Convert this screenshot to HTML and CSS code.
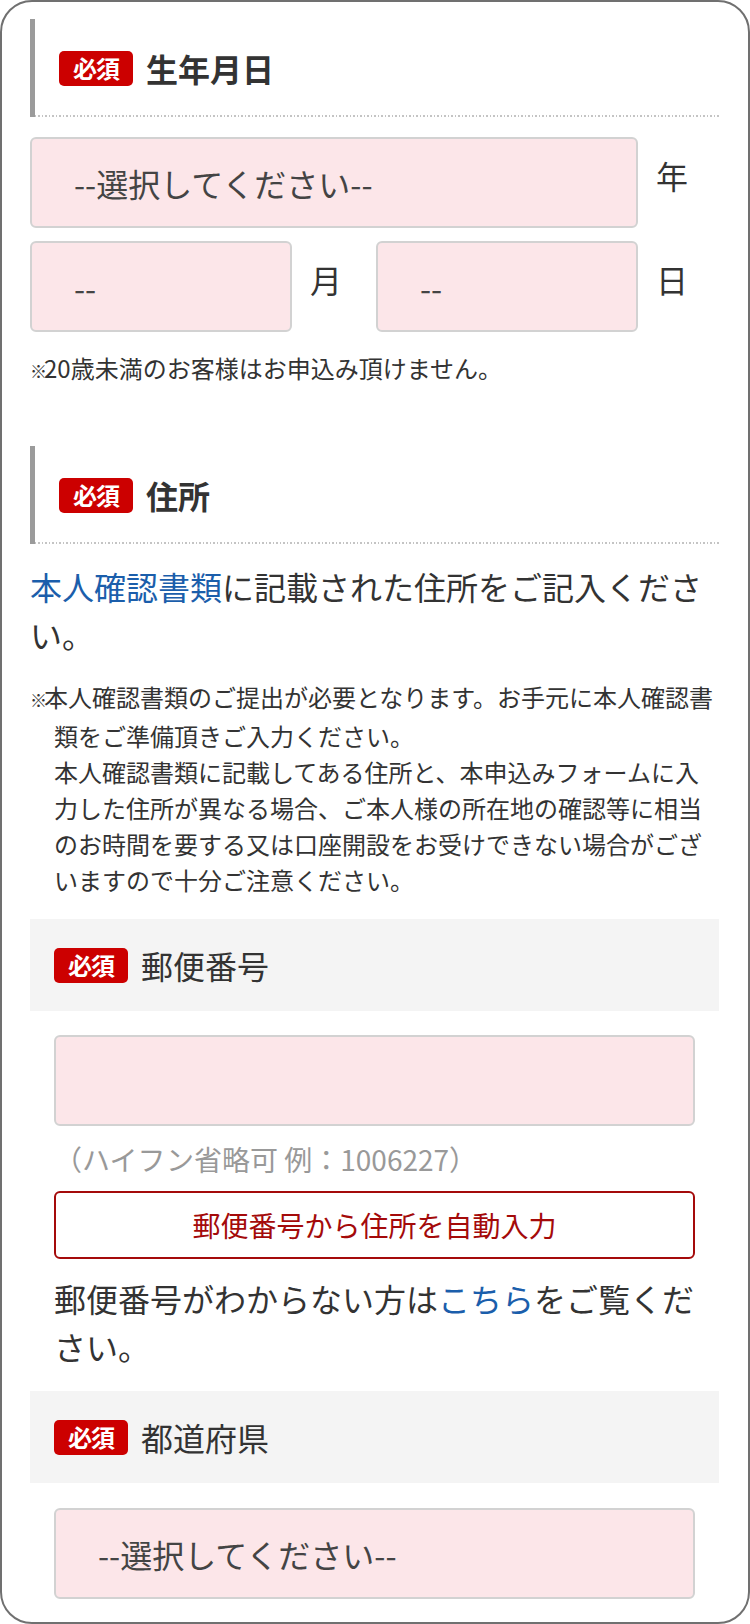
FILE: index.html
```html
<!DOCTYPE html>
<html lang="ja">
<head>
<meta charset="utf-8">
<title>お申込みフォーム</title>
<link rel="stylesheet" href="styles.css">
</head>
<body>
<div class="frame">

  <section class="block block-birth">
    <h2 class="heading"><span class="badge">必須</span><span class="heading-text">生年月日</span></h2>

    <div class="date-row">
      <div class="date-unit">
        <select class="select"><option>--選択してください--</option></select>
        <span class="unit-label">年</span>
      </div>
    </div>
    <div class="date-row date-row-split">
      <div class="date-unit">
        <select class="select"><option>--</option></select>
        <span class="unit-label">月</span>
      </div>
      <div class="date-unit">
        <select class="select"><option>--</option></select>
        <span class="unit-label">日</span>
      </div>
    </div>

    <p class="note note-age"><span class="mark">※</span>20歳未満のお客様はお申込み頂けません。</p>
  </section>

  <section class="block block-address">
    <h2 class="heading"><span class="badge">必須</span><span class="heading-text">住所</span></h2>

    <p class="lead"><a class="link" href="#">本人確認書類</a>に記載された住所をご記入ください。</p>

    <p class="note note-docs"><span class="mark">※</span>本人確認書類のご提出が必要となります。お手元に本人確認書類をご準備頂きご入力ください。<br>本人確認書類に記載してある住所と、本申込みフォームに入力した住所が異なる場合、ご本人様の所在地の確認等に相当のお時間を要する又は口座開設をお受けできない場合がございますので十分ご注意ください。</p>

    <div class="subhead"><span class="badge">必須</span><span class="subhead-text">郵便番号</span></div>
    <div class="field">
      <input class="input" type="text" aria-label="郵便番号">
      <p class="hint">（ハイフン省略可 例：1006227）</p>
      <button class="btn-outline" type="button">郵便番号から住所を自動入力</button>
      <p class="lead lead-field">郵便番号がわからない方は<a class="link" href="#">こちら</a>をご覧ください。</p>
    </div>

    <div class="subhead subhead-pref"><span class="badge">必須</span><span class="subhead-text">都道府県</span></div>
    <div class="field">
      <select class="select select-pref"><option>--選択してください--</option></select>
    </div>
  </section>

</div>
</body>
</html>
```

FILE: styles.css
```css
* {
  box-sizing: border-box;
}

html,
body {
  margin: 0;
  padding: 0;
  background: #ffffff;
}

body {
  width: 750px;
  height: 1624px;
  overflow: hidden;
  font-family: "Noto Sans CJK JP", "Noto Sans", sans-serif;
  color: #333333;
}

.frame {
  width: 750px;
  height: 1624px;
  border: 2px solid #707070;
  border-radius: 32px;
  overflow: hidden;
  padding: 0 29px 0 28px;
}

p {
  margin: 0;
}

/* section heading with side bar and dotted rule */
.heading {
  display: flex;
  align-items: center;
  height: 98px;
  margin: 0;
  padding-left: 24px;
  border-left: 5px solid #9b9b9b;
  background-image: repeating-linear-gradient(to right, #c4c4c4 0 1.5px, transparent 1.5px 3.5px);
  background-size: 100% 2px;
  background-position: left bottom;
  background-repeat: no-repeat;
}

.block-birth .heading {
  margin-top: 17px;
}

.block-address .heading {
  margin-top: 57px;
}

.heading-text {
  margin-left: 13px;
  font-size: 32px;
  font-weight: 700;
  line-height: 1;
  color: #333333;
}

.badge {
  display: inline-flex;
  align-items: center;
  justify-content: center;
  height: 35px;
  padding: 0 14px;
  background: #cc0000;
  border-radius: 5px;
  color: #ffffff;
  font-size: 24px;
  font-weight: 700;
  line-height: 1;
  letter-spacing: -1px;
}

/* selects and text inputs */
.select,
.input {
  display: block;
  width: 100%;
  height: 91px;
  margin: 0;
  padding: 0 0 0 42px;
  background: #fce6e9;
  border: 2px solid #d2d2d2;
  border-radius: 6px;
  font-family: inherit;
  font-size: 32px;
  color: #444444;
  -webkit-appearance: none;
  appearance: none;
  outline: none;
}

/* date rows */
.date-row {
  display: flex;
  gap: 38px;
  width: 654px;
}

.block-birth .date-row {
  margin-top: 20px;
}

.block-birth .date-row-split {
  margin-top: 13px;
}

.date-unit {
  flex: 1;
  display: flex;
  align-items: center;
  gap: 18px;
}

.date-unit .select {
  flex: 1;
}

.unit-label {
  width: 28px;
  padding-bottom: 16px;
  font-size: 32px;
  line-height: 1;
  color: #333333;
}

/* notes */
.note {
  font-size: 24px;
  line-height: 36px;
  padding-left: 24px;
  text-indent: -24px;
  color: #333333;
}

.mark {
  display: inline-block;
  width: 14px;
  text-indent: 0;
  font-size: 17px;
  overflow: visible;
  vertical-align: baseline;
}

.note-age {
  margin-top: 18px;
}

.note-docs {
  margin-top: 21px;
}

.lead {
  margin-top: 18px;
  font-size: 32px;
  line-height: 48px;
  color: #333333;
}

.link {
  color: #1b5eab;
  text-decoration: none;
}

/* grey sub headings */
.subhead {
  display: flex;
  align-items: center;
  height: 92px;
  margin-top: 21px;
  padding-left: 24px;
  background: #f4f4f4;
}

.subhead-text {
  margin-left: 13px;
  font-size: 32px;
  line-height: 1;
  color: #333333;
}

.field {
  padding: 0 24px;
}

.field .input,
.field .select {
  margin-top: 24px;
}

.field .select-pref {
  margin-top: 25px;
}

.hint {
  margin-top: 12px;
  font-size: 28px;
  line-height: 42px;
  color: #999999;
}

.btn-outline {
  display: block;
  width: 100%;
  height: 68px;
  margin-top: 11px;
  background: #ffffff;
  border: 2px solid #a40a0a;
  border-radius: 6px;
  font-family: inherit;
  font-size: 28px;
  color: #a40a0a;
  cursor: pointer;
}

.lead-field {
  margin-top: 15px;
  margin-right: -12px;
}
```
